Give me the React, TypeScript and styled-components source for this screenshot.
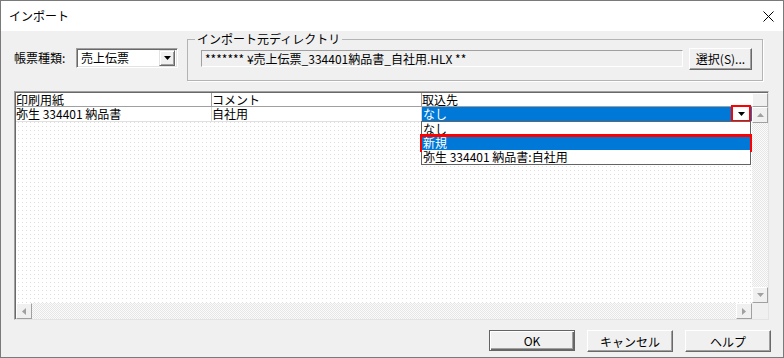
import styled, { createGlobalStyle } from "styled-components";

const GlobalStyle = createGlobalStyle`
  html, body {
    margin: 0;
    padding: 0;
    background: #fff;
  }
  body {
    font-family: "Noto Sans CJK JP", "Noto Sans", sans-serif;
    font-size: 12px;
    color: #000;
  }
  * {
    box-sizing: border-box;
  }
`;

const Window = styled.div`
  width: 784px;
  height: 358px;
  border: 1px solid #7a7a7a;
  background: #f0f0f0;
  display: flex;
  flex-direction: column;
`;

const TitleBar = styled.div`
  height: 30px;
  background: #fff;
  display: flex;
  align-items: center;
  justify-content: space-between;
  padding: 0 9px 0 8px;
`;

const Title = styled.span`
  font-size: 12px;
  line-height: 14px;
`;

const Body = styled.div`
  flex: 1;
  display: flex;
  flex-direction: column;
  padding: 0 14px 0 13px;
`;

const TopRow = styled.div`
  display: flex;
  align-items: flex-start;
  padding-right: 6px;
`;

const KindPicker = styled.div`
  display: flex;
  align-items: center;
  margin-top: 17px;
  height: 20px;
`;

const FieldLabel = styled.span`
  width: 62px;
  line-height: 14px;
`;

const Combo = styled.div`
  width: 102px;
  height: 20px;
  background: #fff;
  border: 1px solid;
  border-color: #a0a0a0 #fff #fff #a0a0a0;
  box-shadow: inset 1px 1px 0 #696969, inset -1px -1px 0 #e3e3e3;
  display: flex;
  align-items: center;
  padding: 2px;
`;

const ComboText = styled.span`
  flex: 1;
  padding-left: 2px;
  line-height: 14px;
`;

const RaisedBox = styled.div`
  background: #f0f0f0;
  border: 1px solid;
  border-color: #e3e3e3 #696969 #696969 #e3e3e3;
  box-shadow: inset 1px 1px 0 #fff, inset -1px -1px 0 #a0a0a0;
  display: flex;
  align-items: center;
  justify-content: center;
`;

const ComboButton = styled(RaisedBox)`
  width: 16px;
  height: 16px;
`;

const GroupBox = styled.fieldset`
  flex: 1;
  margin: 1px 0 0 9px;
  padding: 1px 10px 10px 13px;
  min-width: 0;
  border: 1px solid #b4b4b4;
  box-shadow: 1px 1px 0 #fff;
`;

const GroupLegend = styled.legend`
  margin-left: -6px;
  padding: 0 2px;
  line-height: 14px;
`;

const GroupRow = styled.div`
  display: flex;
  align-items: center;
  height: 23px;
  gap: 6px;
`;

const PathField = styled.div`
  flex: 1;
  height: 17px;
  border: 1px solid;
  border-color: #a0a0a0 #fff #fff #a0a0a0;
  background: #f0f0f0;
  padding-left: 3px;
  line-height: 15px;
  white-space: nowrap;
  overflow: hidden;
`;

const PushButton = styled.button<{ $primary?: boolean; $width: number }>`
  width: ${(p) => p.$width}px;
  height: ${(p) => (p.$primary ? 21 : 22)}px;
  padding: 0;
  font: inherit;
  font-size: 12px;
  color: #000;
  background: #f0f0f0;
  border: 1px solid;
  border-color: ${(p) =>
    p.$primary ? "#646464" : "#fff #696969 #696969 #fff"};
  box-shadow: ${(p) =>
    p.$primary
      ? "inset 1px 1px 0 #fff, inset -1px -1px 0 #696969, inset -2px -2px 0 #a0a0a0"
      : "inset -1px -1px 0 #a0a0a0"};
  display: flex;
  align-items: center;
  justify-content: center;
`;

const GridFrame = styled.div`
  margin-top: 10px;
  height: 229px;
  border: 1px solid;
  border-color: #a0a0a0 #e3e3e3 #e3e3e3 #a0a0a0;
  padding: 1px 0 0 1px;
  box-shadow: inset 1px 1px 0 #696969;
  background: #fff;
  display: grid;
  grid-template-columns: 736px 16px;
  grid-template-rows: 210px 16px;
`;

const TableArea = styled.div`
  position: relative;
  background-color: #fff;
  background-image: linear-gradient(to bottom, transparent 1px, #fff 1px),
    linear-gradient(to right, #dedede 1px, #fff 1px);
  background-size: 4px 4px;
  background-position: 2px 1px;
`;

const Row = styled.div<{ $head?: boolean }>`
  display: grid;
  grid-template-columns: 196px 210px 330px;
  height: ${(p) => (p.$head ? 14 : 15)}px;
  background: #fff;
  border-bottom: 1px solid ${(p) => (p.$head ? "#a0a0a0" : "#e0e0e0")};
`;

const Cell = styled.div<{ $head?: boolean; $selected?: boolean }>`
  position: relative;
  line-height: 13px;
  padding-left: ${(p) => (p.$selected ? 1 : 0)}px;
  border-right: 1px solid ${(p) => (p.$head ? "#a0a0a0" : "#d8d8d8")};
  background: ${(p) => (p.$selected ? "#0078d7" : "transparent")};
  color: ${(p) => (p.$selected ? "#fff" : "#000")};
  white-space: nowrap;
  &:last-child {
    border-right: none;
  }
`;

const CellDropButton = styled.div`
  position: absolute;
  right: 1px;
  top: -2px;
  width: 20px;
  height: 17px;
  border: 2px solid #f00;
  background: #fff;
  display: flex;
  align-items: center;
  justify-content: center;
`;

const DropList = styled.div`
  position: absolute;
  left: -1px;
  top: 14px;
  width: 330px;
  background: #fff;
  border: 1px solid #646464;
  color: #000;
  z-index: 2;
`;

const DropItem = styled.div<{ $active?: boolean }>`
  position: relative;
  height: 14px;
  line-height: 14px;
  padding-left: 1px;
  background: ${(p) => (p.$active ? "#0078d7" : "#fff")};
  color: ${(p) => (p.$active ? "#fff" : "#000")};
  ${(p) =>
    p.$active &&
    `
    &::after {
      content: "";
      position: absolute;
      inset: -2px -2px -2px -2px;
      border: 2px solid #f00;
      border-top-width: 3px;
    }
  `}
`;

const VScroll = styled.div`
  display: flex;
  flex-direction: column;
  background: #f0f0f0;
`;

const HScroll = styled.div`
  display: flex;
  background: #f0f0f0;
`;

const ScrollButton = styled.div<{ $h?: number }>`
  width: 16px;
  height: ${(p) => p.$h ?? 16}px;
  flex: none;
  background: #f0f0f0;
  border: 1px solid;
  border-color: #fff #a0a0a0 #a0a0a0 #fff;
  display: flex;
  align-items: center;
  justify-content: center;
`;

const ScrollTrack = styled.div`
  flex: 1;
  background: repeating-conic-gradient(#e6e6e6 0 25%, #fbfbfb 0 50%) 0 0 / 2px
    2px;
`;

const ScrollCorner = styled.div`
  background: #f0f0f0;
`;

const ButtonRow = styled.div`
  display: flex;
  justify-content: flex-end;
  gap: 12px;
  margin: 10px -2px 0 0;
`;

type Dir = "up" | "down" | "left" | "right";

const Arrow = ({ dir, color = "#000" }: { dir: Dir; color?: string }) => {
  const vertical = dir === "up" || dir === "down";
  const points = {
    down: "0,0 7,0 3.5,4",
    up: "0,4 7,4 3.5,0",
    left: "4,0 4,7 0,3.5",
    right: "0,0 0,7 4,3.5",
  }[dir];
  return (
    <svg
      width={vertical ? 7 : 4}
      height={vertical ? 4 : 7}
      viewBox={vertical ? "0 0 7 4" : "0 0 4 7"}
    >
      <polygon points={points} fill={color} />
    </svg>
  );
};

const CloseIcon = () => (
  <svg width="11" height="11" viewBox="0 0 11 11">
    <path d="M0.5 0.5 L10.5 10.5 M10.5 0.5 L0.5 10.5" stroke="#000" strokeWidth="1" />
  </svg>
);

const targets = ["なし", "新規", "弥生 334401 納品書:自社用"];

export default function App() {
  return (
    <>
      <GlobalStyle />
      <Window>
        <TitleBar>
          <Title>インポート</Title>
          <CloseIcon />
        </TitleBar>
        <Body>
          <TopRow>
            <KindPicker>
              <FieldLabel>帳票種類:</FieldLabel>
              <Combo>
                <ComboText>売上伝票</ComboText>
                <ComboButton>
                  <Arrow dir="down" />
                </ComboButton>
              </Combo>
            </KindPicker>
            <GroupBox>
              <GroupLegend>インポート元ディレクトリ</GroupLegend>
              <GroupRow>
                <PathField>******* ¥売上伝票_334401納品書_自社用.HLX **</PathField>
                <PushButton $width={63}>選択(S)...</PushButton>
              </GroupRow>
            </GroupBox>
          </TopRow>

          <GridFrame>
            <TableArea>
              <Row $head>
                <Cell $head>印刷用紙</Cell>
                <Cell $head>コメント</Cell>
                <Cell $head>取込先</Cell>
              </Row>
              <Row>
                <Cell>弥生 334401 納品書</Cell>
                <Cell>自社用</Cell>
                <Cell $selected>
                  なし
                  <CellDropButton>
                    <Arrow dir="down" />
                  </CellDropButton>
                  <DropList>
                    {targets.map((t) => (
                      <DropItem key={t} $active={t === "新規"}>
                        {t}
                      </DropItem>
                    ))}
                  </DropList>
                </Cell>
              </Row>
            </TableArea>
            <VScroll>
              <ScrollButton $h={14} />
              <ScrollButton>
                <Arrow dir="up" color="#a0a0a0" />
              </ScrollButton>
              <ScrollTrack />
              <ScrollButton>
                <Arrow dir="down" color="#a0a0a0" />
              </ScrollButton>
            </VScroll>
            <HScroll>
              <ScrollButton>
                <Arrow dir="left" color="#a0a0a0" />
              </ScrollButton>
              <ScrollTrack />
              <ScrollButton>
                <Arrow dir="right" color="#a0a0a0" />
              </ScrollButton>
            </HScroll>
            <ScrollCorner />
          </GridFrame>

          <ButtonRow>
            <PushButton $primary $width={86}>
              OK
            </PushButton>
            <PushButton $width={86}>キャンセル</PushButton>
            <PushButton $width={86}>ヘルプ</PushButton>
          </ButtonRow>
        </Body>
      </Window>
    </>
  );
}
